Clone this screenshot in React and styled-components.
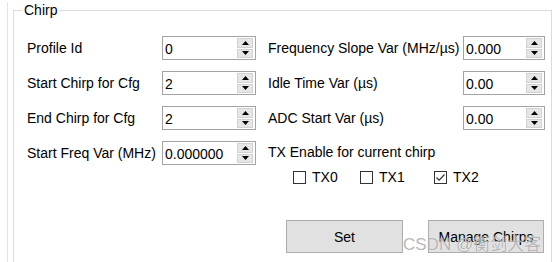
import React from "react";
import styled, { createGlobalStyle } from "styled-components";

const Global = createGlobalStyle`
  html, body { margin: 0; padding: 0; background: #fff; }
  body {
    width: 554px; height: 262px; overflow: hidden; position: relative;
    font-family: "Liberation Sans", Arial, sans-serif; font-size: 14px; color: #000;
  }
`;

const Outer = styled.div`
  margin-left: 7px;
  border-left: 1px solid #e3e3e3;
  padding-left: 5px;
  height: 262px;
  box-sizing: border-box;
`;

const Group = styled.fieldset`
  margin: 2px 0 0 0;
  width: 539px;
  box-sizing: border-box;
  height: 260px;
  border: 1px solid #dcdcdc;
  border-bottom: none;
  border-radius: 0;
  padding: 18px 0 0 8px;
`;

const Legend = styled.legend`
  padding: 0 2px;
  font-size: 14px;
  line-height: 16px;
`;

const Content = styled.div`
  padding-left: 5px;
`;

const Grid = styled.div`
  display: grid;
  grid-template-columns: 135px 94px 12px 195px 82px;
  grid-template-rows: 24px 24px 24px 24px;
  row-gap: 11px;
  align-items: center;
`;

const Label = styled.div`
  grid-column: ${(p) => p.$col};
  white-space: nowrap;
  line-height: 16px;
  margin-top: ${(p) => p.$dy || 0}px;
`;

const WideLabel = styled(Label)`
  grid-column: 4 / span 2;
`;

const SpinBox = styled.div`
  grid-column: ${(p) => p.$col};
  height: 24px;
  box-sizing: border-box;
  border: 1px solid #a3a3a3;
  display: flex;
  align-items: center;
  background: #fff;
  padding: 1px 2px 1px 2px;
`;

const SpinValue = styled.div`
  flex: 1;
  line-height: 16px;
  padding-top: 2px;
`;

const SpinButtons = styled.div`
  width: 16px;
  height: 20px;
  display: flex;
  flex-direction: column;
  gap: 1px;
`;

const SpinBtn = styled.div`
  flex: 1;
  background: #e6e6e6;
  border: 1px solid #d2d2d2;
  box-sizing: border-box;
  display: flex;
  align-items: center;
  justify-content: center;
`;

const Arrow = ({ down }) => (
  <svg width="7" height="4" viewBox="0 0 7 4">
    {down ? <path d="M0 0H7L3.5 4Z" fill="#000" /> : <path d="M0 4H7L3.5 0Z" fill="#000" />}
  </svg>
);

const Spin = ({ col, value }) => (
  <SpinBox $col={col}>
    <SpinValue>{value}</SpinValue>
    <SpinButtons>
      <SpinBtn><Arrow /></SpinBtn>
      <SpinBtn><Arrow down /></SpinBtn>
    </SpinButtons>
  </SpinBox>
);

const CheckRow = styled.div`
  display: grid;
  grid-template-columns: 67px 74px auto;
  margin: 4px 0 0 266px;
  height: 13px;
  align-items: center;
`;

const CheckItem = styled.label`
  display: flex;
  align-items: center;
  gap: 6px;
  line-height: 16px;
`;

const Box = styled.span`
  width: 13px;
  height: 13px;
  box-sizing: border-box;
  border: 1px solid #333;
  background: #fff;
  display: flex;
  align-items: center;
  justify-content: center;
`;

const Check = ({ checked, label }) => (
  <CheckItem>
    <Box>
      {checked && (
        <svg width="11" height="11" viewBox="0 0 11 11">
          <path d="M1.5 5.5L4.2 8.2L9.5 2.5" fill="none" stroke="#333" strokeWidth="1.2" />
        </svg>
      )}
    </Box>
    {label}
  </CheckItem>
);

const ButtonRow = styled.div`
  display: flex;
  gap: 25px;
  margin: 38px 0 0 259px;
`;

const Button = styled.button`
  width: ${(p) => p.$w}px;
  height: 33px;
  box-sizing: border-box;
  background: #e1e1e1;
  border: 1px solid #adadad;
  border-radius: 0;
  font-family: "Liberation Sans", Arial, sans-serif;
  font-size: 14px;
  color: #000;
  padding: 0;
`;

const Watermark = styled.div`
  position: absolute;
  left: 403px;
  top: 235px;
  font-family: "Liberation Sans", "Noto Sans CJK SC", sans-serif;
  font-size: 17px;
  line-height: 20px;
  color: rgba(120, 120, 120, 0.55);
  text-shadow: 0 0 1px #fff;
  white-space: nowrap;
  pointer-events: none;
`;

export default function App() {
  return (
    <>
      <Global />
      <Outer>
        <Group>
          <Legend>Chirp</Legend>
          <Content>
            <Grid>
              <Label $col={1}>Profile Id</Label>
              <Spin col={2} value="0" />
              <Label $col={4}>Frequency Slope Var (MHz/µs)</Label>
              <Spin col={5} value="0.000" />

              <Label $col={1}>Start Chirp for Cfg</Label>
              <Spin col={2} value="2" />
              <Label $col={4}>Idle Time Var (µs)</Label>
              <Spin col={5} value="0.00" />

              <Label $col={1}>End Chirp for Cfg</Label>
              <Spin col={2} value="2" />
              <Label $col={4}>ADC Start Var (µs)</Label>
              <Spin col={5} value="0.00" />

              <Label $col={1}>Start Freq Var (MHz)</Label>
              <Spin col={2} value="0.000000" />
              <WideLabel $dy={-3}>TX Enable for current chirp</WideLabel>
            </Grid>
            <CheckRow>
              <Check label="TX0" />
              <Check label="TX1" />
              <Check label="TX2" checked />
            </CheckRow>
            <ButtonRow>
              <Button $w={117}>Set</Button>
              <Button $w={116}>Manage Chirps</Button>
            </ButtonRow>
          </Content>
        </Group>
      </Outer>
      <Watermark>CSDN @衡剑大客</Watermark>
    </>
  );
}
